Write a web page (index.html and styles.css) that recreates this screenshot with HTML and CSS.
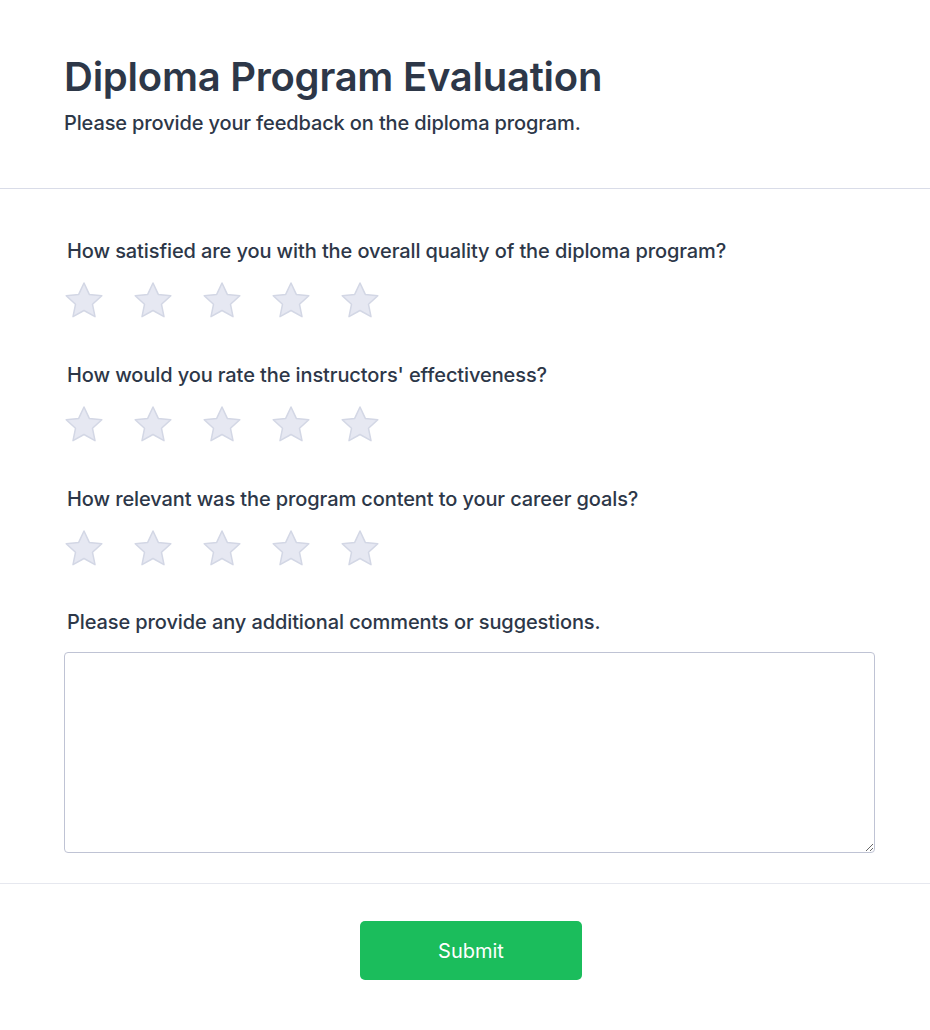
FILE: index.html
```html
<!DOCTYPE html>
<html lang="en">
<head>
<meta charset="utf-8">
<title>Diploma Program Evaluation</title>
<link rel="stylesheet" href="styles.css">
</head>
<body>
<div class="card">
  <header class="head">
    <h1 class="title">Diploma Program Evaluation</h1>
    <p class="subtitle">Please provide your feedback on the diploma program.</p>
  </header>
  <form class="body">
    <div class="question">
      <label class="label">How satisfied are you with the overall quality of the diploma program?</label>
      <div class="stars">
        <svg class="star" viewBox="0 0 40 40"><path d="M20 2 L25.3 13.4 L37.8 14.8 L28.5 23.3 L31 35.7 L20 29.5 L9 35.7 L11.5 23.3 L2.2 14.8 L14.7 13.4 Z"/></svg>
        <svg class="star" viewBox="0 0 40 40"><path d="M20 2 L25.3 13.4 L37.8 14.8 L28.5 23.3 L31 35.7 L20 29.5 L9 35.7 L11.5 23.3 L2.2 14.8 L14.7 13.4 Z"/></svg>
        <svg class="star" viewBox="0 0 40 40"><path d="M20 2 L25.3 13.4 L37.8 14.8 L28.5 23.3 L31 35.7 L20 29.5 L9 35.7 L11.5 23.3 L2.2 14.8 L14.7 13.4 Z"/></svg>
        <svg class="star" viewBox="0 0 40 40"><path d="M20 2 L25.3 13.4 L37.8 14.8 L28.5 23.3 L31 35.7 L20 29.5 L9 35.7 L11.5 23.3 L2.2 14.8 L14.7 13.4 Z"/></svg>
        <svg class="star" viewBox="0 0 40 40"><path d="M20 2 L25.3 13.4 L37.8 14.8 L28.5 23.3 L31 35.7 L20 29.5 L9 35.7 L11.5 23.3 L2.2 14.8 L14.7 13.4 Z"/></svg>
      </div>
    </div>
    <div class="question">
      <label class="label">How would you rate the instructors' effectiveness?</label>
      <div class="stars">
        <svg class="star" viewBox="0 0 40 40"><path d="M20 2 L25.3 13.4 L37.8 14.8 L28.5 23.3 L31 35.7 L20 29.5 L9 35.7 L11.5 23.3 L2.2 14.8 L14.7 13.4 Z"/></svg>
        <svg class="star" viewBox="0 0 40 40"><path d="M20 2 L25.3 13.4 L37.8 14.8 L28.5 23.3 L31 35.7 L20 29.5 L9 35.7 L11.5 23.3 L2.2 14.8 L14.7 13.4 Z"/></svg>
        <svg class="star" viewBox="0 0 40 40"><path d="M20 2 L25.3 13.4 L37.8 14.8 L28.5 23.3 L31 35.7 L20 29.5 L9 35.7 L11.5 23.3 L2.2 14.8 L14.7 13.4 Z"/></svg>
        <svg class="star" viewBox="0 0 40 40"><path d="M20 2 L25.3 13.4 L37.8 14.8 L28.5 23.3 L31 35.7 L20 29.5 L9 35.7 L11.5 23.3 L2.2 14.8 L14.7 13.4 Z"/></svg>
        <svg class="star" viewBox="0 0 40 40"><path d="M20 2 L25.3 13.4 L37.8 14.8 L28.5 23.3 L31 35.7 L20 29.5 L9 35.7 L11.5 23.3 L2.2 14.8 L14.7 13.4 Z"/></svg>
      </div>
    </div>
    <div class="question">
      <label class="label">How relevant was the program content to your career goals?</label>
      <div class="stars">
        <svg class="star" viewBox="0 0 40 40"><path d="M20 2 L25.3 13.4 L37.8 14.8 L28.5 23.3 L31 35.7 L20 29.5 L9 35.7 L11.5 23.3 L2.2 14.8 L14.7 13.4 Z"/></svg>
        <svg class="star" viewBox="0 0 40 40"><path d="M20 2 L25.3 13.4 L37.8 14.8 L28.5 23.3 L31 35.7 L20 29.5 L9 35.7 L11.5 23.3 L2.2 14.8 L14.7 13.4 Z"/></svg>
        <svg class="star" viewBox="0 0 40 40"><path d="M20 2 L25.3 13.4 L37.8 14.8 L28.5 23.3 L31 35.7 L20 29.5 L9 35.7 L11.5 23.3 L2.2 14.8 L14.7 13.4 Z"/></svg>
        <svg class="star" viewBox="0 0 40 40"><path d="M20 2 L25.3 13.4 L37.8 14.8 L28.5 23.3 L31 35.7 L20 29.5 L9 35.7 L11.5 23.3 L2.2 14.8 L14.7 13.4 Z"/></svg>
        <svg class="star" viewBox="0 0 40 40"><path d="M20 2 L25.3 13.4 L37.8 14.8 L28.5 23.3 L31 35.7 L20 29.5 L9 35.7 L11.5 23.3 L2.2 14.8 L14.7 13.4 Z"/></svg>
      </div>
    </div>
    <div class="question comments">
      <label class="label">Please provide any additional comments or suggestions.</label>
      <textarea class="textarea"></textarea>
    </div>
  </form>
  <footer class="foot">
    <button class="submit" type="button">Submit</button>
  </footer>
</div>
</body>
</html>
```
FILE: styles.css
```css
html, body {
  margin: 0;
  padding: 0;
  background: #ffffff;
  overflow: hidden;
}
body {
  font-family: Inter, "Noto Sans", "Liberation Sans", sans-serif;
  color: #2d3748;
}
.card {
  width: 940px;
  background: #ffffff;
}
.head {
  padding: 53px 64px 51px;
  border-bottom: 1px solid #d9dce8;
}
.title {
  margin: 0 0 9px;
  font-size: 40px;
  line-height: 48px;
  font-weight: 600;
  letter-spacing: -0.25px;
  color: #2d3748;
}
.subtitle {
  margin: 0;
  font-size: 20px;
  line-height: 27px;
  font-weight: 500;
  letter-spacing: -0.13px;
  color: #2d3748;
}
.body {
  padding: 49px 65px 30px 64px;
  display: flex;
  flex-direction: column;
  gap: 41px;
  border-bottom: 1px solid #e6e8ef;
}
.question {
  display: flex;
  flex-direction: column;
  gap: 16px;
}
.comments {
  margin-top: -1px;
}
.label {
  padding-left: 3px;
  font-size: 20px;
  line-height: 27px;
  font-weight: 500;
  letter-spacing: -0.1px;
  color: #2d3748;
}
.stars {
  display: flex;
  gap: 29px;
  height: 40px;
}
.star {
  width: 40px;
  height: 40px;
  fill: #e6e8f2;
  stroke: #d3d7e5;
  stroke-width: 1.5;
  stroke-linejoin: round;
}
.textarea {
  display: block;
  box-sizing: border-box;
  width: 811px;
  height: 201px;
  border: 1px solid #bfc3d4;
  border-radius: 4px;
  resize: vertical;
  font-family: inherit;
  font-size: 16px;
  padding: 8px;
}
.foot {
  padding: 37px 0 50px;
  display: flex;
  justify-content: center;
}
.submit {
  width: 222px;
  height: 59px;
  margin-left: 2px;
  border: none;
  border-radius: 5px;
  background: #1bbd5c;
  color: #ffffff;
  font-family: inherit;
  font-size: 20px;
  font-weight: 400;
}
```
